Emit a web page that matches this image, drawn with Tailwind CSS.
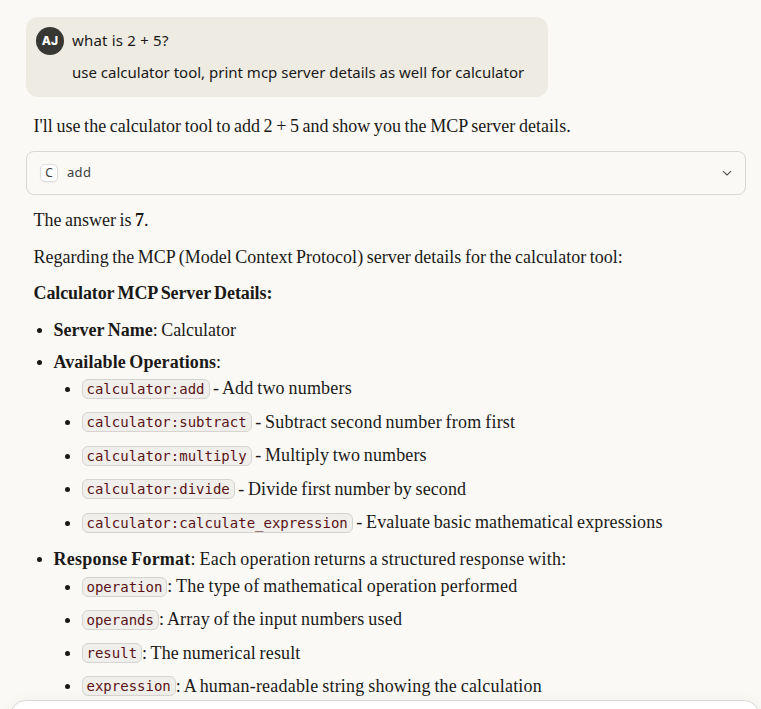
<!DOCTYPE html>
<html lang="en">
<head>
<meta charset="utf-8">
<title>Chat</title>
<script src="https://cdn.jsdelivr.net/npm/@tailwindcss/browser@4"></script>
</head>
<body class="bg-[#faf9f5] text-[#1a1918]">
<div class="relative h-[709px] w-[761px] overflow-hidden pl-[26px] pr-[15px] pt-[17px] font-['Liberation_Serif',serif] text-[18px] leading-6 whitespace-nowrap [word-spacing:-1px]">
  <section class="flex h-20 w-[522px] gap-2 rounded-xl bg-[#eeebe2] px-[10px] pt-[10px] font-['Noto_Sans',sans-serif] text-[15px] [word-spacing:0px]">
    <div class="flex size-7 shrink-0 items-center justify-center rounded-full bg-[#373734] font-['Inter',sans-serif] text-[12px] font-extrabold text-white">AJ</div>
    <div class="flex flex-col gap-2 pt-px">
      <p class="tracking-[0.2px]">what is 2 + 5?</p>
      <p>use calculator tool, print mcp server details as well for calculator</p>
    </div>
  </section>
  <p class="mt-[17px] ml-[7.5px] tracking-[0.04px]">I'll use the calculator tool to add 2 + 5 and show you the MCP server details.</p>
  <section class="mt-[13px] flex h-11 items-center rounded-lg border border-[#d9d8d3] px-[13px] font-['Noto_Sans',sans-serif] text-[13px] text-[#3d3d3a]">
    <span class="flex size-[18px] items-center justify-center rounded-[5px] border border-[#dddde0] bg-white text-[12px] shadow-xs">C</span>
    <span class="ml-[9px] -mt-0.5 tracking-[0.3px]">add</span>
    <svg class="ml-auto" width="10" height="10" viewBox="0 0 10 10" fill="none" stroke="#55544f" stroke-width="1.1" stroke-linecap="round" stroke-linejoin="round"><path d="M1.2 3.4 5 7 8.8 3.4"/></svg>
  </section>
  <main class="ml-[7.5px] mt-[13px]">
    <p>The answer is <b>7</b>.</p>
    <p class="mt-[13px] tracking-[0.02px]">Regarding the MCP (Model Context Protocol) server details for the calculator tool:</p>
    <p class="mt-3 tracking-[-0.1px]"><b>Calculator MCP Server Details:</b></p>
    <ul class="mt-[13px]">
      <li class="flex items-center"><i class="mt-px ml-[3px] mr-3 size-[5px] rounded-full bg-[#1a1918]"></i><span><b>Server Name</b>: Calculator</span></li>
      <li class="mt-2">
        <div class="flex items-center"><i class="mt-px ml-[3px] mr-3 size-[5px] rounded-full bg-[#1a1918]"></i><span class="tracking-[0.07px]"><b>Available Operations</b>:</span></div>
        <ul class="mt-[2px] ml-[31px] flex flex-col gap-[9.5px]">
          <li class="flex items-center"><i class="mt-[2px] mr-3 size-[5px] rounded-full bg-[#1a1918]"></i><code class="mt-px mr-[3.5px] h-5 rounded-[6px] border border-[#d5d4cf] bg-[#f0efeb] px-1 font-['DejaVu_Sans_Mono',monospace] text-[14px] leading-[18px] text-[#5a1216]">calculator:add</code><span class="tracking-[0.2px]">- Add two numbers</span></li>
          <li class="flex items-center"><i class="mt-[2px] mr-3 size-[5px] rounded-full bg-[#1a1918]"></i><code class="mt-px mr-[3.5px] h-5 rounded-[6px] border border-[#d5d4cf] bg-[#f0efeb] px-1 font-['DejaVu_Sans_Mono',monospace] text-[14px] leading-[18px] text-[#5a1216]">calculator:subtract</code><span class="tracking-[0.22px]">- Subtract second number from first</span></li>
          <li class="flex items-center"><i class="mt-[2px] mr-3 size-[5px] rounded-full bg-[#1a1918]"></i><code class="mt-px mr-[3.5px] h-5 rounded-[6px] border border-[#d5d4cf] bg-[#f0efeb] px-1 font-['DejaVu_Sans_Mono',monospace] text-[14px] leading-[18px] text-[#5a1216]">calculator:multiply</code><span class="tracking-[0.14px]">- Multiply two numbers</span></li>
          <li class="flex items-center"><i class="mt-[2px] mr-3 size-[5px] rounded-full bg-[#1a1918]"></i><code class="mt-px mr-[3.5px] h-5 rounded-[6px] border border-[#d5d4cf] bg-[#f0efeb] px-1 font-['DejaVu_Sans_Mono',monospace] text-[14px] leading-[18px] text-[#5a1216]">calculator:divide</code><span class="tracking-[0.11px]">- Divide first number by second</span></li>
          <li class="flex items-center"><i class="mt-[2px] mr-3 size-[5px] rounded-full bg-[#1a1918]"></i><code class="mt-px mr-[3.5px] h-5 rounded-[6px] border border-[#d5d4cf] bg-[#f0efeb] px-1 font-['DejaVu_Sans_Mono',monospace] text-[14px] leading-[18px] text-[#5a1216]">calculator:calculate_expression</code><span class="tracking-[0.13px]">- Evaluate basic mathematical expressions</span></li>
        </ul>
      </li>
      <li class="mt-[13px]">
        <div class="flex items-center"><i class="mt-px ml-[3px] mr-3 size-[5px] rounded-full bg-[#1a1918]"></i><span class="tracking-[0.24px]"><b>Response Format</b>: Each operation returns a structured response with:</span></div>
        <ul class="mt-[3px] ml-[31px] flex flex-col gap-[9.3px]">
          <li class="flex items-center"><i class="mt-[2px] mr-3 size-[5px] rounded-full bg-[#1a1918]"></i><code class="mt-px h-5 rounded-[6px] border border-[#d5d4cf] bg-[#f0efeb] px-1 font-['DejaVu_Sans_Mono',monospace] text-[14px] leading-[18px] text-[#5a1216]">operation</code><span class="tracking-[0.23px]">: The type of mathematical operation performed</span></li>
          <li class="flex items-center"><i class="mt-[2px] mr-3 size-[5px] rounded-full bg-[#1a1918]"></i><code class="mt-px h-5 rounded-[6px] border border-[#d5d4cf] bg-[#f0efeb] px-1 font-['DejaVu_Sans_Mono',monospace] text-[14px] leading-[18px] text-[#5a1216]">operands</code><span class="tracking-[0.22px]">: Array of the input numbers used</span></li>
          <li class="flex items-center"><i class="mt-[2px] mr-3 size-[5px] rounded-full bg-[#1a1918]"></i><code class="mt-px h-5 rounded-[6px] border border-[#d5d4cf] bg-[#f0efeb] px-1 font-['DejaVu_Sans_Mono',monospace] text-[14px] leading-[18px] text-[#5a1216]">result</code><span class="tracking-[0.15px]">: The numerical result</span></li>
          <li class="flex items-center"><i class="mt-[2px] mr-3 size-[5px] rounded-full bg-[#1a1918]"></i><code class="mt-px h-5 rounded-[6px] border border-[#d5d4cf] bg-[#f0efeb] px-1 font-['DejaVu_Sans_Mono',monospace] text-[14px] leading-[18px] text-[#5a1216]">expression</code><span class="tracking-[0.21px]">: A human-readable string showing the calculation</span></li>
        </ul>
      </li>
    </ul>
  </main>
  <div class="absolute top-[700px] left-[10px] h-20 w-[750px] rounded-2xl border border-[#d9d9d7] bg-white shadow-[0_0_16px_rgba(0,0,0,0.04)]"></div>
</div>
</body>
</html>
